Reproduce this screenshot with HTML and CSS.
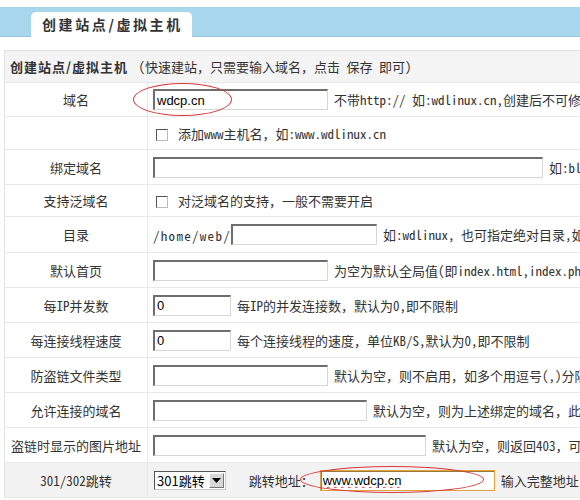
FILE: index.html
```html
<!DOCTYPE html>
<html>
<head>
<meta charset="utf-8">
<link rel="stylesheet" href="styles.css">
</head>
<body>
<div class="topbar">
  <div class="tab">创建站点/虚拟主机</div>
</div>
<div class="wrap">
<table class="form">
  <tr class="head"><td colspan="2"><b>创建站点/虚拟主机</b> (快速建站，只需要输入域名，点击 保存 即可)</td></tr>
  <tr class="r34"><td class="lbl">域名</td><td><input class="in w175" type="text" value="wdcp.cn"><span class="tip">不带http:// 如:wdlinux.cn,创建后不可修改</span></td></tr>
  <tr class="r32"><td class="lbl"></td><td><input class="cb" type="checkbox"><span>添加www主机名，如:www.wdlinux.cn</span></td></tr>
  <tr class="r35"><td class="lbl">绑定域名</td><td><input class="in w390" type="text"><span class="tip">如:blog.wdlinux.cn</span></td></tr>
  <tr class="r31"><td class="lbl">支持泛域名</td><td><input class="cb" type="checkbox"><span>对泛域名的支持，一般不需要开启</span></td></tr>
  <tr class="r36"><td class="lbl">目录</td><td><span class="path">/home/web/</span><input class="in w146" type="text"><span class="tip">如:wdlinux, 也可指定绝对目录,如:/www/wdlinux</span></td></tr>
  <tr class="r35"><td class="lbl">默认首页</td><td><input class="in w175" type="text"><span class="tip">为空为默认全局值(即index.html,index.php,index.htm)</span></td></tr>
  <tr class="r35"><td class="lbl">每IP并发数</td><td><input class="in w78" type="text" value="0"><span class="tip">每IP的并发连接数，默认为0,即不限制</span></td></tr>
  <tr class="r35"><td class="lbl">每连接线程速度</td><td><input class="in w78" type="text" value="0"><span class="tip">每个连接线程的速度，单位KB/S,默认为0,即不限制</span></td></tr>
  <tr class="r35"><td class="lbl">防盗链文件类型</td><td><input class="in w175" type="text"><span class="tip">默认为空，则不启用，如多个用逗号(,)分隔</span></td></tr>
  <tr class="r35"><td class="lbl">允许连接的域名</td><td><input class="in w214" type="text"><span class="tip">默认为空，则为上述绑定的域名，此外</span></td></tr>
  <tr class="r35"><td class="lbl">盗链时显示的图片地址</td><td><input class="in w273" type="text"><span class="tip">默认为空，则返回403，可</span></td></tr>
  <tr class="r35 gray"><td class="lbl">301/302跳转</td><td><span class="sel"><span class="selval">301跳转</span><span class="selbtn"><svg width="9" height="5" viewBox="0 0 9 5"><path d="M0 0h9L4.5 5z" fill="#000"/></svg></span></span><span class="jlabel">跳转地址：</span><input class="in w175 focus" type="text" value="www.wdcp.cn"><span class="tip">输入完整地址，如:http://www.wdcp.cn</span></td></tr>
</table>
<div class="ring ring1"></div>
<div class="ring ring2"></div>
</div>
</body>
</html>
```
FILE: styles.css
```css
html, body {
  margin: 0;
  padding: 0;
  overflow: hidden;
  background: #fff;
}
body {
  font-family: "Noto Sans Mono CJK SC", "Noto Sans CJK SC", sans-serif;
  font-size: 13px;
  color: #333;
  width: 580px;
  height: 500px;
}
.topbar {
  margin-top: 7px;
  height: 29px;
  background: #a8d7ed;
  border-bottom: 1px solid #96c4da;
  display: flex;
  align-items: flex-end;
}
.tab {
  margin-left: 31px;
  width: 161px;
  height: 25px;
  box-sizing: border-box;
  background: #fff;
  border-radius: 5px 5px 0 0;
  padding-left: 11px;
  font-family: "Noto Sans CJK SC", sans-serif;
  font-weight: bold;
  font-size: 14px;
  letter-spacing: 2.6px;
  line-height: 25px;
  color: #333;
  margin-bottom: -1px;
}
.wrap {
  position: relative;
  margin: 13px 0 0 4px;
}
.form {
  width: 820px;
  border-collapse: collapse;
  border: 1px solid #e2e2e2;
}
.form td {
  border-bottom: 1px solid #e8e8e8;
  padding: 0 0 0 5px;
  vertical-align: middle;
  white-space: nowrap;
}
.form td.lbl {
  width: 142px;
  padding: 0;
  text-align: center;
  border-right: 1px solid #e8e8e8;
}
.head td {
  height: 31px;
  background: #f4f4f4;
  padding-left: 5px;
}
.head b {
  font-family: "Noto Sans CJK SC", sans-serif;
  letter-spacing: 1px;
  margin-right: 4px;
}
.r31 td { height: 31px; }
.r32 td { height: 32px; }
.r34 td { height: 33px; }
.r35 td { height: 34px; }
.r36 td { height: 35px; }
.gray td { background: #f2f2f2; }
.path {
  letter-spacing: 1.3px;
  vertical-align: middle;
}
.in {
  box-sizing: border-box;
  height: 21px;
  margin: 0;
  padding: 0 2px;
  vertical-align: middle;
  border-style: solid;
  border-width: 2px 1px 1px 2px;
  border-color: #6e6e6e #d6d6d6 #d6d6d6 #6e6e6e;
  background: #fff;
  font-family: "Liberation Sans", sans-serif;
  font-size: 13px;
  color: #000;
  outline: none;
}
.w78 { width: 78px; }
.w146 { width: 146px; }
.w175 { width: 175px; }
.w214 { width: 214px; }
.w273 { width: 273px; }
.w390 { width: 390px; }
.tip {
  margin-left: 6px;
  vertical-align: middle;
}
.cb {
  appearance: none;
  -webkit-appearance: none;
  width: 12px;
  height: 12px;
  margin: 0 10px 0 3px;
  border: 1px solid #555;
  border-right-color: #bbb;
  border-bottom-color: #bbb;
  background: #fff;
  vertical-align: middle;
}
.sel {
  display: inline-flex;
  align-items: center;
  vertical-align: middle;
  margin-left: 1px;
  height: 19px;
  box-sizing: border-box;
  border-style: solid;
  border-width: 1px;
  border-color: #555 #ccc #ccc #555;
  background: #fff;
}
.selval {
  font-family: "Noto Sans CJK SC", sans-serif;
  font-size: 13px;
  color: #000;
  padding: 0 3px 0 2px;
  line-height: 17px;
}
.selbtn {
  width: 15px;
  height: 15px;
  margin: 0 1px;
  box-sizing: border-box;
  background: #d8d8d8;
  border: 1px solid;
  border-color: #fafafa #777 #777 #fafafa;
  display: flex;
  align-items: center;
  justify-content: center;
}
.jlabel {
  margin-left: 23px;
  margin-right: 6px;
  vertical-align: middle;
}
.focus {
  border: 1px solid #e3a23f;
  box-shadow: inset 1px 1px 0 #9a7a3a;
  text-decoration: underline wavy #e03030;
  text-decoration-thickness: 1px;
}
.ring {
  position: absolute;
  border: 1.5px solid #d83a3a;
  border-radius: 50%;
  pointer-events: none;
}
.ring1 {
  left: 129px;
  top: 33px;
  width: 97px;
  height: 31px;
}
.ring2 {
  left: 296px;
  top: 416px;
  width: 182px;
  height: 25px;
}
```
